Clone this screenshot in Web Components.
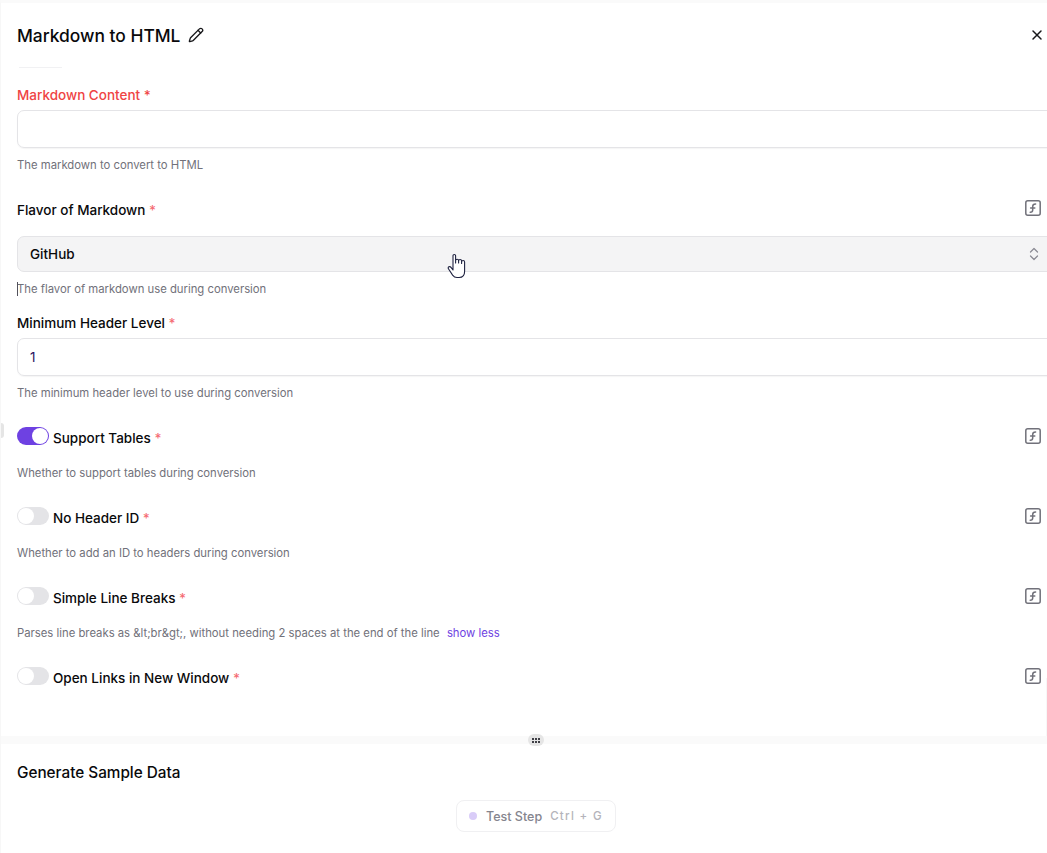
<!DOCTYPE html>
<html>
<head>
<meta charset="utf-8">
<title>Markdown to HTML</title>
<style>
  html, body { margin: 0; height: 100%; overflow: hidden; background: #fff; }
  body { font-family: Inter, "Noto Sans", sans-serif; color: #09090b; }
</style>
</head>
<body>
<step-panel>
  <panel-header slot="header">Markdown to HTML</panel-header>

  <text-field label="Markdown Content" help="The markdown to convert to HTML" error></text-field>
  <select-field label="Flavor of Markdown" value="GitHub" help="The flavor of markdown use during conversion"></select-field>
  <text-field class="tight" label="Minimum Header Level" value="1" help="The minimum header level to use during conversion"></text-field>
  <toggle-field label="Support Tables" help="Whether to support tables during conversion" checked></toggle-field>
  <toggle-field label="No Header ID" help="Whether to add an ID to headers during conversion"></toggle-field>
  <toggle-field label="Simple Line Breaks" help="Parses line breaks as &amp;amp;lt;br&amp;amp;gt;, without needing 2 spaces at the end of the line" more="show less"></toggle-field>
  <toggle-field label="Open Links in New Window"></toggle-field>

  <sample-data slot="footer"></sample-data>
</step-panel>

<script>
const fieldCss = `
  .label { font-size: 13.5px; font-weight: 500; line-height: 20px; }
  .label i { font-style: normal; color: #f56c73; }
  .help { font-size: 11.3px; line-height: 16px; color: #71717a; white-space: nowrap; }
  .help a { color: #6e41e2; margin-left: 4px; }
`;

const fxIcon = `<svg width="16" height="16" viewBox="0 0 16 16" fill="none" stroke="#71717a" stroke-width="1.5" stroke-linecap="round" stroke-linejoin="round"><rect x=".8" y=".8" width="14.4" height="14.4" rx="2"/><path d="M5.2 12.200c1.700 0 2.500-.7 2.500-2.300V6.400c0-1.500.9-2.500 2.900-2.500M5.600 7.900h4.200"/></svg>`;

class PanelHeader extends HTMLElement {
  constructor() {
    super();
    this.attachShadow({ mode: "open" });
  }
  connectedCallback() {
    this.shadowRoot.innerHTML = `
    <style>
      :host { display: block; padding: 0 0 0 17px; }
      .bar { display: flex; align-items: center; height: 64px; }
      h1 { margin: 0; padding-top: 1px; font-size: 17.4px; font-weight: 500; line-height: 24px; }
      .pencil { margin-left: 8px; display: block; }
      .close { margin-left: auto; margin-right: 3px; display: block; }
      hr { width: 43px; height: 1px; margin: 0 0 0 2px; border: 0; background: #f1f1f3; }
    </style>
    <div class="bar">
      <h1><slot></slot></h1>
      <svg class="pencil" width="16" height="16" viewBox="0 0 24 24" fill="none" stroke="#18181b" stroke-width="2" stroke-linecap="round" stroke-linejoin="round"><path d="M21.174 6.812a1 1 0 0 0-3.986-3.987L3.842 16.174a2 2 0 0 0-.5.83l-1.321 4.352a.5.5 0 0 0 .623.622l4.353-1.32a2 2 0 0 0 .83-.497z"/><path d="m15 5 4 4"/></svg>
      <svg class="close" width="14" height="14" viewBox="0 0 14 14" fill="none" stroke="#18181b" stroke-width="1.500" stroke-linecap="round"><path d="M3 3l8 8M11 3l-8 8"/></svg>
    </div>
    <hr>`;
  }
}

class TextField extends HTMLElement {
  constructor() {
    super();
    this.attachShadow({ mode: "open" });
  }
  connectedCallback() {
    const error = this.hasAttribute("error");
    this.shadowRoot.innerHTML = `
    <style>
      :host { display: block; margin-top: 17px; }
      :host(.tight) { margin-top: 16px; }
      ${fieldCss}
      .label.err, .label.err i { color: #ef4444; }
      .box {
        box-sizing: border-box; height: 38px; margin: 5px -30px 9px 0; padding-left: 12px;
        display: flex; align-items: center;
        border: 1px solid #e4e4e7; border-radius: 7px; box-shadow: 0 1px 1px rgba(0,0,0,.04);
        font-size: 13.5px; color: #2a1260;
      }
    </style>
    <div class="label ${error ? "err" : ""}">${this.getAttribute("label")} <i>*</i></div>
    <div class="box">${this.getAttribute("value") || ""}</div>
    <div class="help">${this.getAttribute("help")}</div>`;
  }
}

class SelectField extends HTMLElement {
  constructor() {
    super();
    this.attachShadow({ mode: "open" });
  }
  connectedCallback() {
    this.shadowRoot.innerHTML = `
    <style>
      :host { display: block; margin-top: 27px; }
      ${fieldCss}
      .top { display: flex; justify-content: space-between; height: 20px; }
      .box {
        box-sizing: border-box; height: 36px; margin: 16px -30px 9px 0; padding: 0 30px 0 12px;
        display: flex; align-items: center; justify-content: space-between;
        background: #f4f4f5; border: 1px solid #e4e4e7; border-radius: 7px;
        font-size: 13.5px; font-weight: 500;
      }
      .help { position: relative; }
      .caret { position: absolute; left: 0; top: 1px; width: 1px; height: 14px; background: #52525b; }
      svg { display: block; }
    </style>
    <div class="top">
      <div class="label">${this.getAttribute("label")} <i>*</i></div>
      ${fxIcon}
    </div>
    <div class="box">
      <span>${this.getAttribute("value")}</span>
      <svg width="12" height="16" viewBox="0 0 12 16" fill="none" stroke="#8a8a93" stroke-width="1.200" stroke-linecap="round" stroke-linejoin="round"><path d="M2.500 6 6 2.500 9.500 6M2.500 10 6 13.500 9.500 10"/></svg>
    </div>
    <div class="help"><span class="caret"></span>${this.getAttribute("help")}</div>`;
  }
}

class ToggleField extends HTMLElement {
  constructor() {
    super();
    this.attachShadow({ mode: "open" });
  }
  connectedCallback() {
    const help = this.getAttribute("help");
    const more = this.getAttribute("more");
    this.shadowRoot.innerHTML = `
    <style>
      :host { display: block; margin-top: 27px; }
      ${fieldCss}
      .top { display: flex; align-items: flex-start; height: 20px; }
      .track {
        box-sizing: border-box; width: 32px; height: 18px; margin: -1px 4px 0 0; padding: 1px;
        border-radius: 9px; background: #e4e4e7; display: flex;
      }
      .track span { width: 16px; height: 16px; border-radius: 50%; background: #fff; }
      .track.on { background: #6e41e2; justify-content: flex-end; }
      .fx { margin-left: auto; display: block; }
      .help { margin-top: 17px; }
    </style>
    <div class="top">
      <div class="track ${this.hasAttribute("checked") ? "on" : ""}"><span></span></div>
      <div class="label">${this.getAttribute("label")} <i>*</i></div>
      <span class="fx">${fxIcon}</span>
    </div>
    ${help ? `<div class="help">${help}${more ? ` <a>${more}</a>` : ""}</div>` : ""}`;
  }
}

class SampleData extends HTMLElement {
  constructor() {
    super();
    this.attachShadow({ mode: "open" });
  }
  connectedCallback() {
    this.shadowRoot.innerHTML = `
    <style>
      :host { display: block; padding: 19px 16px 0; }
      h2 { margin: 0; font-size: 15.3px; font-weight: 500; line-height: 20px; }
      .center { display: flex; justify-content: center; margin: 17px -24px 0 0; }
      .btn {
        box-sizing: border-box; width: 160px; height: 32px; padding-left: 12px;
        display: flex; align-items: center;
        border: 1px solid #f0f0f2; border-radius: 8px;
        font-size: 12.500px; font-weight: 500; color: #85858e;
      }
      .dot { width: 8px; height: 8px; border-radius: 50%; background: #d9ccf8; margin-right: 9px; }
      .keys { margin-left: 8px; font-size: 11.500px; letter-spacing: 1.300px; color: #b4b4bb; }
    </style>
    <h2>Generate Sample Data</h2>
    <div class="center">
      <div class="btn"><span class="dot"></span>Test Step<span class="keys">Ctrl + G</span></div>
    </div>`;
  }
}

class StepPanel extends HTMLElement {
  constructor() {
    super();
    this.attachShadow({ mode: "open" });
  }
  connectedCallback() {
    this.shadowRoot.innerHTML = `
    <style>
      :host {
        display: flex; flex-direction: column; position: relative;
        box-sizing: border-box; height: 853px; overflow: hidden;
        border-top: 3px solid #fafafa; border-left: 1px solid #f7f7f7;
      }
      .form { height: 668px; padding: 0 6px 0 16px; flex: none; }
      .header { flex: none; margin-left: -1px; }
      .split { position: relative; flex: none; height: 8px; background: #fafafa; }
      .grip {
        position: absolute; left: 527px; top: -2px; width: 16px; height: 12px;
        display: grid; grid-template-columns: repeat(3, 2px); gap: 1px; align-content: center; justify-content: center;
        background: #e5e5e5; border-radius: 6px;
      }
      .grip span { height: 2px; background: #3f3f46; }
      .nub { position: absolute; left: -3px; top: 420px; width: 6px; height: 15px; border-radius: 3px; background: #e5e5e5; }
      .hand { position: absolute; left: 446px; top: 250px; }
      .edge { position: absolute; right: 0; top: 675px; width: 1px; height: 58px; background: #f7f7f7; }
    </style>
    <div class="header"><slot name="header"></slot></div>
    <div class="form"><slot></slot></div>
    <div class="split"><div class="grip"><span></span><span></span><span></span><span></span><span></span><span></span></div></div>
    <slot name="footer"></slot>
    <div class="nub"></div>
    <div class="edge"></div>
    <svg class="hand" width="19" height="27" viewBox="0 0 19 27" fill="#fff" stroke="#1f2240" stroke-width="1.100" stroke-linejoin="round" stroke-linecap="round"><path d="M6 14V2.800a1.300 1.300 0 0 1 2.600 0V10V7.800a1.500 1.500 0 0 1 3 0V10V8a1.500 1.500 0 0 1 3 0V10.500V9a1.500 1.500 0 0 1 3 0v9.500c0 3.500-2 6-5.500 6H10c-2 0-3.400-1-4.400-2.400L1.600 16c-.7-1-.4-1.800.3-2.200.7-.4 1.500-.2 2.100.6L6 17z"/></svg>`;
  }
}

customElements.define("panel-header", PanelHeader);
customElements.define("text-field", TextField);
customElements.define("select-field", SelectField);
customElements.define("toggle-field", ToggleField);
customElements.define("sample-data", SampleData);
customElements.define("step-panel", StepPanel);
</script>
</body>
</html>
